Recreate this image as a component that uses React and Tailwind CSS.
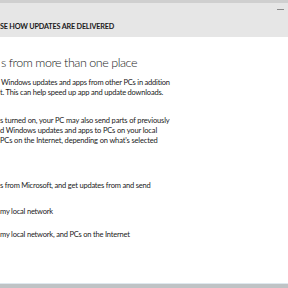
export default function App() {
  const font = { fontFamily: 'Lato, "Open Sans", sans-serif' };
  return (
    <div
      className="w-[288px] h-[288px] overflow-hidden bg-white flex flex-col text-[#1a1a1a]"
      style={font}
    >
      {/* window frame top */}
      <div className="h-[3px] bg-[#cfcfcf]" />

      {/* title bar */}
      <div className="h-[34px] bg-[#e6e6e6] flex flex-col relative">
        <div className="absolute right-[4px] top-[6px] w-[7px] h-px bg-[#8a8a8a]" />
        <div className="mt-[19px] text-[7.25px] leading-[10px] font-bold tracking-[-0.18px] whitespace-nowrap">
          SE HOW UPDATES ARE DELIVERED
        </div>
      </div>

      {/* content */}
      <div className="flex-1 flex flex-col">
        <div className="mt-[17px] ml-[1px] text-[12.5px] leading-[18px] font-light tracking-[-0.45px] whitespace-nowrap">
          s from more than one place
        </div>

        <div className="mt-[6px] text-[7.5px] leading-[10px] tracking-[-0.2px] whitespace-nowrap">
          <div className="ml-[1px]">Windows updates and apps from other PCs in addition</div>
          <div>t. This can help speed up app and update downloads.</div>
        </div>

        <div className="mt-[18px] text-[7.5px] leading-[10px] tracking-[-0.15px] whitespace-nowrap">
          <div>s turned on, your PC may also send parts of previously</div>
          <div>d Windows updates and apps to PCs on your local</div>
          <div>PCs on the Internet, depending on what's selected</div>
        </div>

        <div className="mt-[35px] text-[7.5px] leading-[10px] tracking-[-0.2px] whitespace-nowrap">
          s from Microsoft, and get updates from and send
        </div>

        <div className="mt-[16px] text-[7.5px] leading-[10px] tracking-[-0.2px] whitespace-nowrap">
          my local network
        </div>

        <div className="mt-[13px] text-[7.5px] leading-[10px] tracking-[-0.2px] whitespace-nowrap">
          my local network, and PCs on the Internet
        </div>

        <div className="flex-1" />
        <div className="h-px bg-[#dfe8ee]" />
        <div className="h-[4px] bg-[#bfc3c5]" />
      </div>
    </div>
  );
}
